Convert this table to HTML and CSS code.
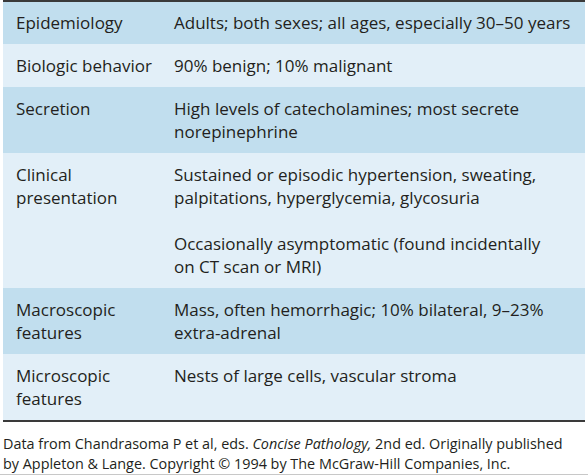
FILE: index.html
```html
<!DOCTYPE html>
<html lang="en">
<head>
    <meta charset="UTF-8">
    <meta name="viewport" content="width=device-width, initial-scale=1.0">
    <title>Pheochromocytoma</title>
    <link rel="stylesheet" href="styles.css">
</head>
<body>
    <div class="page">
        <table class="tbl">
            <tr class="dark first">
                <td class="lbl">Epidemiology</td>
                <td class="val">Adults; both sexes; all ages, especially 30–50 years</td>
            </tr>
            <tr class="light">
                <td class="lbl">Biologic behavior</td>
                <td class="val">90% benign; 10% malignant</td>
            </tr>
            <tr class="dark">
                <td class="lbl">Secretion</td>
                <td class="val">High levels of catecholamines; most secrete<br>norepinephrine</td>
            </tr>
            <tr class="light">
                <td class="lbl">Clinical<br>presentation</td>
                <td class="val">
                    <p class="para">Sustained or episodic hypertension, sweating,<br>palpitations, hyperglycemia, glycosuria</p>
                    <p class="para">Occasionally asymptomatic (found incidentally<br>on CT scan or MRI)</p>
                </td>
            </tr>
            <tr class="dark">
                <td class="lbl">Macroscopic<br>features</td>
                <td class="val">Mass, often hemorrhagic; 10% bilateral, 9–23%<br>extra-adrenal</td>
            </tr>
            <tr class="light">
                <td class="lbl">Microscopic<br>features</td>
                <td class="val">Nests of large cells, vascular stroma</td>
            </tr>
        </table>
        <p class="note">Data from Chandrasoma P et al, eds. <i>Concise Pathology,</i> 2nd ed. Originally published<br>by Appleton &amp; Lange. Copyright © 1994 by The McGraw-Hill Companies, Inc.</p>
    </div>
</body>
</html>
```

FILE: styles.css
```css
body{
    margin: 0;
    background-color: white;
    font-family: "Open Sans", sans-serif;
    color: #231f20;
}
.page{
    width: 588px;
    height: 474px;
    border-bottom: 1px solid #c8c8c8;
}
.tbl{
    margin-left: 3px;
    width: 582px;
    border-collapse: collapse;
    border-top: 2px solid #3a3a3a;
    border-bottom: 2px solid #3a3a3a;
    font-size: 17px;
    line-height: 23px;
}
.tbl td{
    vertical-align: top;
    padding: 10px 0 10px 13px;
}
.tbl .first td{
    padding-top: 9px;
}
.lbl{
    width: 145px;
}
.dark{
    background-color: #c1deee;
}
.light{
    background-color: #e2eff8;
}
.para{
    margin: 0;
}
.para + .para{
    margin-top: 23px;
}
.note{
    margin: 12px 0 0 3px;
    font-size: 14.4px;
    line-height: 20px;
}
```
